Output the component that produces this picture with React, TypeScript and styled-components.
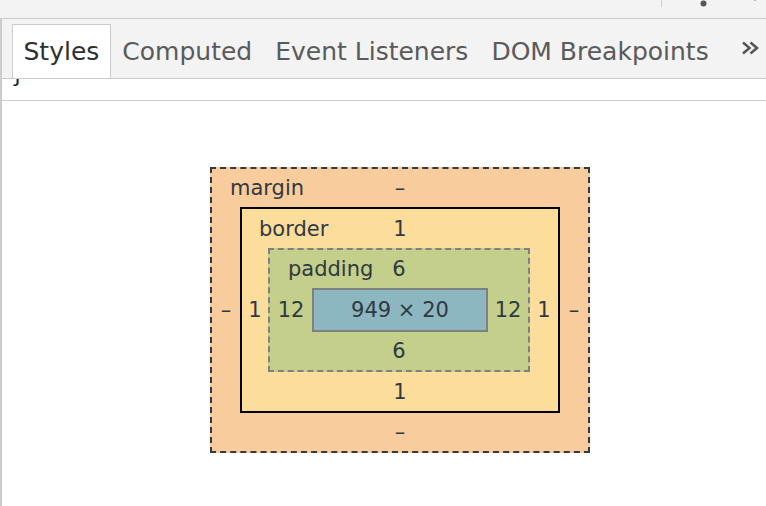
import React from 'react'
import styled, { createGlobalStyle } from 'styled-components'

const GlobalStyle = createGlobalStyle`
  html, body {
    margin: 0;
    padding: 0;
    background: #ffffff;
  }
  body {
    width: 766px;
    height: 506px;
    overflow: hidden;
    font-family: 'DejaVu Sans', 'Noto Sans', sans-serif;
  }
`

const Page = styled.div`
  display: flex;
  flex-direction: column;
  width: 766px;
  height: 506px;
`

const TopBar = styled.div`
  display: flex;
  align-items: flex-start;
  height: 18px;
  background: #f3f3f3;
  border-bottom: 1px solid #cbcbcb;
  padding-right: 4px;
  overflow: hidden;
`

const Spacer = styled.div`
  flex: 1;
`

const Divider = styled.div`
  width: 1px;
  height: 7px;
  background: #cfcfcf;
`

const ToolIcon = styled.svg<{ $gap: number }>`
  display: block;
  margin-left: ${(p) => p.$gap}px;
`

const Panel = styled.div`
  flex: 1;
  display: flex;
  flex-direction: column;
  border-left: 2px solid #cccccc;
`

const TabBar = styled.div`
  display: flex;
  align-items: flex-end;
  height: 59px;
  padding-left: 10px;
  background: #f3f3f3;
  border-bottom: 1px solid #cccccc;
`

const Tab = styled.div<{ $active?: boolean }>`
  box-sizing: border-box;
  height: 54px;
  padding: 0 10.5px;
  display: flex;
  align-items: center;
  border: 1px solid ${(p) => (p.$active ? '#cccccc' : 'transparent')};
  border-bottom: none;
  background: ${(p) => (p.$active ? '#ffffff' : 'transparent')};
  color: ${(p) => (p.$active ? '#303030' : '#5a5a5a')};
  font-size: 25px;
  white-space: nowrap;
`

const More = styled.svg`
  display: block;
  margin: 0 0 23px 21px;
`

const Strip = styled.div`
  height: 21px;
  overflow: hidden;
  border-bottom: 1px solid #cccccc;
  padding-left: 9px;
`

const Brace = styled.div`
  margin-top: -15px;
  font-family: 'DejaVu Sans Mono', monospace;
  font-size: 22px;
  line-height: 22px;
  color: #222222;
`

const Main = styled.div`
  flex: 1;
  display: flex;
  align-items: flex-start;
  padding: 66px 0 0 208px;
  color: #303942;
  font-size: 21px;
`

const Layer = styled.div<{
  $bg: string
  $border: string
  $cols: string
  $rows: string
}>`
  display: grid;
  grid-template-columns: ${(p) => p.$cols};
  grid-template-rows: ${(p) => p.$rows};
  background: ${(p) => p.$bg};
  border: ${(p) => p.$border};
`

const EdgeRow = styled.div`
  grid-column: 1 / -1;
  display: grid;
  grid-template-columns: 1fr auto 1fr;
  align-items: center;
`

const Label = styled.div<{ $indent: number }>`
  justify-self: start;
  padding-left: ${(p) => p.$indent}px;
`

const Value = styled.div`
  display: flex;
  align-items: center;
  justify-content: center;
`

const Content = styled.div`
  box-sizing: border-box;
  width: 176px;
  height: 44px;
  display: flex;
  align-items: center;
  justify-content: center;
  background: #8cb6c0;
  border: 2px solid #808080;
`

type BoxProps = {
  label: string
  indent: number
  top: string
  right: string
  bottom: string
  left: string
  bg: string
  border: string
  cols: string
  rows: string
  children: React.ReactNode
}

function Box({ label, indent, top, right, bottom, left, bg, border, cols, rows, children }: BoxProps) {
  return (
    <Layer $bg={bg} $border={border} $cols={cols} $rows={rows}>
      <EdgeRow>
        <Label $indent={indent}>{label}</Label>
        <Value>{top}</Value>
        <div />
      </EdgeRow>
      <Value>{left}</Value>
      {children}
      <Value>{right}</Value>
      <EdgeRow>
        <div />
        <Value>{bottom}</Value>
        <div />
      </EdgeRow>
    </Layer>
  )
}

const tabs = ['Styles', 'Computed', 'Event Listeners', 'DOM Breakpoints']

export default function App() {
  return (
    <Page>
      <GlobalStyle />
      <TopBar>
        <Spacer />
        <Divider />
        <ToolIcon $gap={35} width="14" height="18" viewBox="0 0 14 18">
          <circle cx="7" cy="-11" r="3" fill="#555" />
          <circle cx="7" cy="-3" r="3" fill="#555" />
          <circle cx="6.5" cy="3.5" r="3" fill="#555" />
        </ToolIcon>
        <ToolIcon $gap={37} width="14" height="18" viewBox="0 0 14 18">
          <circle cx="7" cy="-1.5" r="2" fill="#777" />
        </ToolIcon>
      </TopBar>
      <Panel>
        <TabBar>
          {tabs.map((t, i) => (
            <Tab key={t} $active={i === 0}>
              {t}
            </Tab>
          ))}
          <More width="19" height="14" viewBox="0 0 19 14">
            <polyline points="2,1.5 8.5,7 2,12.5" fill="none" stroke="#555" strokeWidth="2.5" />
            <polyline points="9.5,1.5 16,7 9.5,12.5" fill="none" stroke="#555" strokeWidth="2.5" />
          </More>
        </TabBar>
        <Strip>
          <Brace>{'}'}</Brace>
        </Strip>
        <Main>
          <Box
            label="margin"
            indent={18}
            top="–"
            right="–"
            bottom="–"
            left="–"
            bg="#f9cc9d"
            border="2px dashed #333a40"
            cols="28px auto 28px"
            rows="38px auto 38px"
          >
            <Box
              label="border"
              indent={17}
              top="1"
              right="1"
              bottom="1"
              left="1"
              bg="#fddd9b"
              border="2px solid #000000"
              cols="26px auto 28px"
              rows="39px auto 39px"
            >
              <Box
                label="padding"
                indent={18}
                top="6"
                right="12"
                bottom="6"
                left="12"
                bg="#c3cf8a"
                border="2px dashed #808080"
                cols="42px auto 40px"
                rows="38px auto 38px"
              >
                <Content>949 × 20</Content>
              </Box>
            </Box>
          </Box>
        </Main>
      </Panel>
    </Page>
  )
}
